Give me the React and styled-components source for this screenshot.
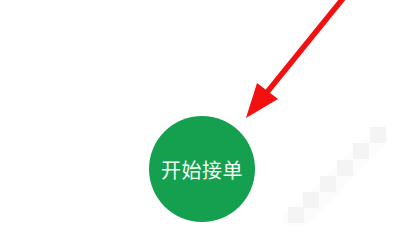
import React from 'react';
import styled, { createGlobalStyle } from 'styled-components';

const GlobalStyle = createGlobalStyle`
  html, body {
    margin: 0;
    padding: 0;
    background: #ffffff;
  }
  body {
    font-family: "Noto Sans CJK SC", "Noto Sans", sans-serif;
  }
`;

const Stage = styled.div`
  position: relative;
  width: 404px;
  height: 234px;
  overflow: hidden;
  background: #ffffff;
  display: flex;
  justify-content: center;
  padding-top: 116px;
  box-sizing: border-box;
`;

const StartButton = styled.button`
  width: 106px;
  height: 106px;
  border-radius: 50%;
  border: none;
  padding: 0;
  background: #14a04f;
  color: #f4fff6;
  font-family: "Noto Sans CJK SC", "Noto Sans", sans-serif;
  font-size: 20px;
  letter-spacing: 0.5px;
  display: flex;
  align-items: center;
  justify-content: center;
  cursor: pointer;
`;

const Overlay = styled.svg`
  position: absolute;
  left: 0;
  top: 0;
  width: 404px;
  height: 234px;
  pointer-events: none;
`;

// faint checker band in the lower right corner
const squares = [
  [370, 127], [353, 143], [337, 160], [320, 176], [303, 192], [288, 207],
];

function Arrow() {
  return (
    <Overlay viewBox="0 0 404 234">
      <polygon
        points="286,226 282,218 376,128 386,124 388,142 306,226"
        fill="#fcfcfc"
      />
      {squares.map(([x, y], i) => (
        <rect key={i} x={x} y={y} width="16" height="16" fill="#f4f4f4" />
      ))}
      <line x1="345" y1="-4" x2="264" y2="96" stroke="#f21010" strokeWidth="5.5" />
      <polygon points="246,118 257,83 278,99" fill="#f21010" />
    </Overlay>
  );
}

export default function App() {
  return (
    <>
      <GlobalStyle />
      <Stage>
        <StartButton>开始接单</StartButton>
        <Arrow />
      </Stage>
    </>
  );
}
